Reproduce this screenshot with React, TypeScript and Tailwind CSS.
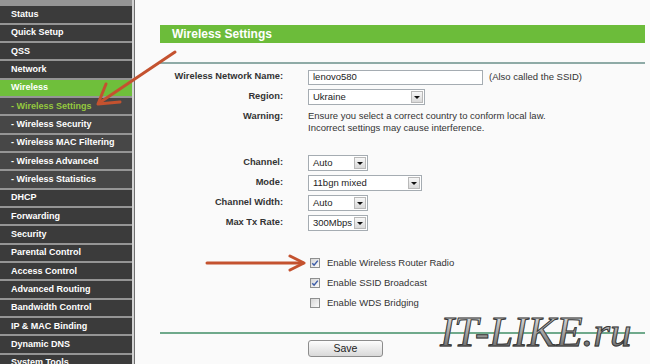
import React from "react";

type Item = { t: string; sub?: boolean; active?: boolean; cur?: boolean };

const items: Item[] = [
  { t: "Status" },
  { t: "Quick Setup" },
  { t: "QSS" },
  { t: "Network" },
  { t: "Wireless", active: true },
  { t: "- Wireless Settings", sub: true, cur: true },
  { t: "- Wireless Security", sub: true },
  { t: "- Wireless MAC Filtering", sub: true },
  { t: "- Wireless Advanced", sub: true },
  { t: "- Wireless Statistics", sub: true },
  { t: "DHCP" },
  { t: "Forwarding" },
  { t: "Security" },
  { t: "Parental Control" },
  { t: "Access Control" },
  { t: "Advanced Routing" },
  { t: "Bandwidth Control" },
  { t: "IP & MAC Binding" },
  { t: "Dynamic DNS" },
  { t: "System Tools" },
];

function SideItem({ it }: { it: Item }) {
  const bg = it.active ? "bg-[#6fbf3b]" : it.sub ? "bg-[#474747]" : "bg-[#3b3b3b]";
  const color = it.cur ? "text-[#95c93e]" : "text-white";
  return (
    <div
      className={`h-[18.33px] shrink-0 border-b-2 border-[#959595] flex items-center pl-[11px] text-[9px] font-bold leading-none whitespace-nowrap ${bg} ${color}`}
    >
      {it.t}
    </div>
  );
}

function DropBtn() {
  return (
    <div className="ml-auto w-[12px] h-[12px] border border-[#b9b9b9] bg-linear-to-b from-[#f7f7f7] to-[#d9d9d9] flex items-center justify-center">
      <div className="w-0 h-0 border-l-[3px] border-r-[3px] border-t-[3px] border-l-transparent border-r-transparent border-t-[#111]" />
    </div>
  );
}

function Select({ value, className }: { value: string; className: string }) {
  return (
    <div
      className={`h-[16px] bg-white border border-[#a5acb2] flex items-center pl-[4px] pr-[1px] text-[9.5px] text-[#222] ${className}`}
    >
      <span className="leading-none">{value}</span>
      <DropBtn />
    </div>
  );
}

function Row({ label, children }: { label: string; children: React.ReactNode }) {
  return (
    <div className="h-[20px] flex items-center">
      <div className="w-[123px] text-right text-[9.3px] font-bold text-[#333] leading-none">{label}</div>
      <div className="ml-[25px] flex items-center">{children}</div>
    </div>
  );
}

function Check({ checked, label }: { checked: boolean; label: string }) {
  return (
    <div className="h-[20px] flex items-center">
      <div className="w-[123px]" />
      <div className="ml-[27px] flex items-center">
        <div className="w-[10px] h-[10px] border border-[#8e8f8f] bg-linear-to-br from-[#d6d6d6] to-[#fbfbfb] flex items-center justify-center">
          {checked && (
            <svg width="8" height="8" viewBox="0 0 8 8">
              <path d="M1.3 4.2 L3.1 6.2 L6.8 1.6" fill="none" stroke="#3d5da8" strokeWidth="1.5" />
            </svg>
          )}
        </div>
        <span className="ml-[7px] text-[9.5px] text-[#333] leading-none">{label}</span>
      </div>
    </div>
  );
}

export default function App() {
  return (
    <div className="relative w-[650px] h-[364px] overflow-hidden flex bg-[#fafafa] font-['Liberation_Sans',Arial,sans-serif]">
      {/* sidebar */}
      <div className="w-[132px] shrink-0 flex flex-col bg-[#959595]">
        <div className="h-[6.33px] shrink-0" />
        {items.map((it) => (
          <SideItem key={it.t} it={it} />
        ))}
      </div>
      <div className="w-[2px] shrink-0 bg-[#d3d3d3]" />
      <div className="w-[1px] shrink-0 bg-[#707070]" />

      {/* content */}
      <div className="flex-1 pt-[25px] pl-[25px] pr-[5px] flex flex-col">
        <div className="h-[18px] bg-[#6cbc3a] flex items-center pl-[12px] text-white font-bold text-[12px] leading-none">
          Wireless Settings
        </div>
        <div className="mt-[19px] h-[2px] bg-[#8eaaa6]" />

        <div className="mt-[3px]">
          <Row label="Wireless Network Name:">
            <div className="w-[175px] h-[15px] bg-white border border-[#a5acb2] flex items-center pl-[4px] text-[9.5px] text-[#222] leading-none">
              lenovo580
            </div>
            <span className="ml-[6px] text-[9.5px] text-[#333] leading-none">(Also called the SSID)</span>
          </Row>
          <Row label="Region:">
            <Select value="Ukraine" className="w-[117px]" />
          </Row>
        </div>
        <div className="mt-[3px] flex">
          <div className="w-[123px] text-right text-[9.3px] font-bold text-[#333] leading-[12px]">Warning:</div>
          <div className="ml-[25px] text-[9.5px] text-[#333] leading-[12px]">
            <div>Ensure you select a correct country to conform local law.</div>
            <div>Incorrect settings may cause interference.</div>
          </div>
        </div>

        <div className="mt-[19px]">
          <Row label="Channel:">
            <Select value="Auto" className="w-[60px]" />
          </Row>
          <Row label="Mode:">
            <Select value="11bgn mixed" className="w-[114px]" />
          </Row>
          <Row label="Channel Width:">
            <Select value="Auto" className="w-[60px]" />
          </Row>
          <Row label="Max Tx Rate:">
            <Select value="300Mbps" className="w-[60px]" />
          </Row>
        </div>

        <div className="mt-[20px]">
          <Check checked label="Enable Wireless Router Radio" />
          <Check checked label="Enable SSID Broadcast" />
          <Check checked={false} label="Enable WDS Bridging" />
        </div>

        <div className="mt-[19px] h-[2px] bg-[#6fa98b]" />
        <div className="mt-[6px] flex">
          <div className="ml-[148px] w-[75px] h-[17px] border border-[#8c8c8c] rounded-[3px] bg-linear-to-b from-[#fdfdfd] to-[#d9d9d9] flex items-center justify-center text-[10.5px] text-[#222] leading-none">
            Save
          </div>
        </div>
      </div>

      {/* annotation arrows */}
      <svg className="absolute left-0 top-0 pointer-events-none" width="650" height="364" viewBox="0 0 650 364">
        <g stroke="#c4522f" strokeWidth="3" strokeLinecap="round" fill="none">
          <path d="M175 52 L99 103" />
          <path d="M106 84 L98 104 L120 102" strokeLinejoin="round" />
          <path d="M207 263 L303 263" />
          <path d="M290 256 L304 263 L290 270" strokeLinejoin="round" />
        </g>
      </svg>

      {/* watermark */}
      <div className="absolute left-[440px] top-[310px] text-[43px] leading-none italic font-['Liberation_Serif','Times_New_Roman',serif] bg-linear-to-b from-[#f0f0f0] via-[#a8a8a8] to-[#5a5a5a] bg-clip-text text-transparent [-webkit-text-stroke:1px_#3a3a3a] whitespace-nowrap">
        IT-LIKE.ru
      </div>
    </div>
  );
}
